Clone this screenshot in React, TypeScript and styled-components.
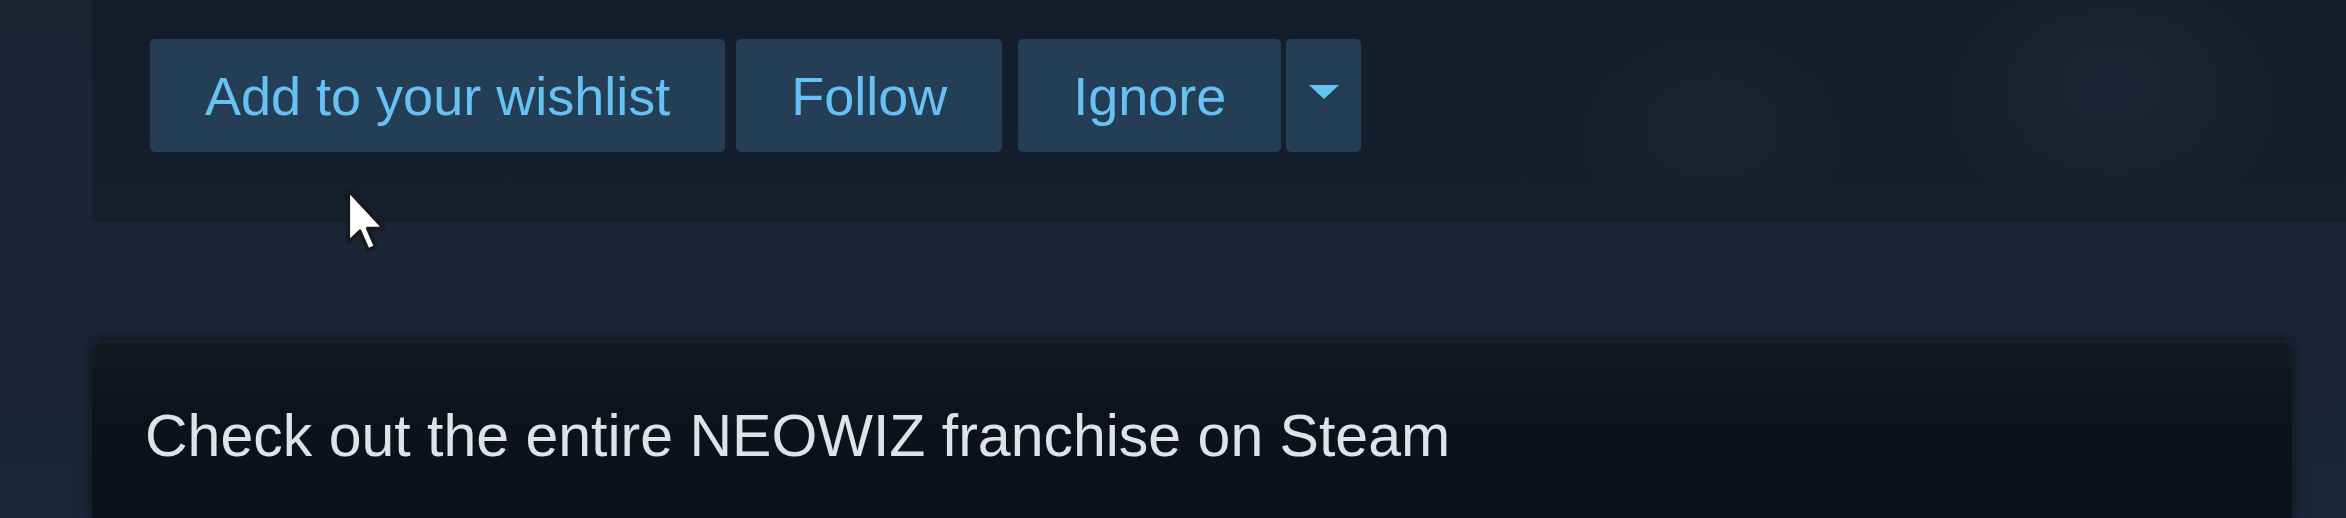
import styled, { createGlobalStyle } from "styled-components";

const GlobalStyle = createGlobalStyle`
  html, body {
    margin: 0;
    padding: 0;
    background: #1b2537;
    overflow: hidden;
  }
  body {
    font-family: "Liberation Sans", Arial, sans-serif;
  }
`;

const Page = styled.div`
  position: relative;
  width: 2346px;
  height: 518px;
  overflow: hidden;
  display: flex;
  flex-direction: column;
  padding-left: 92px;
  box-sizing: border-box;
  background: linear-gradient(180deg, #1a2433 0%, #1b2537 60%, #1c2639 100%);
`;

const Header = styled.div`
  height: 222px;
  display: flex;
  align-items: flex-start;
  padding: 39px 0 0 58px;
  box-sizing: border-box;
  background:
    radial-gradient(ellipse 260px 200px at 2020px 80px, rgba(40, 52, 72, 0.35), transparent 70%),
    radial-gradient(ellipse 200px 160px at 1620px 120px, rgba(40, 52, 72, 0.25), transparent 70%),
    linear-gradient(180deg, #141d2a 0%, #161f2d 100%);
`;

const Actions = styled.div`
  display: flex;
  align-items: center;
  gap: 11px;
`;

const Group = styled.div`
  display: flex;
  gap: 5px;
  margin-left: 5px;
`;

const ActionButton = styled.button`
  height: 113px;
  padding: 0 55px;
  border: none;
  border-radius: 5px;
  background: #243e56;
  color: #67c1f5;
  font-family: "Liberation Sans", Arial, sans-serif;
  font-size: 54px;
  display: flex;
  align-items: center;
  cursor: pointer;
`;

const DropButton = styled(ActionButton)`
  width: 75px;
  padding: 0 0 8px;
  justify-content: center;
  box-sizing: border-box;
`;

const Gap = styled.div`
  height: 118px;
  flex-shrink: 0;
`;

const Franchise = styled.div`
  width: 2200px;
  flex: 1;
  box-sizing: border-box;
  padding: 61px 0 0 53px;
  border-radius: 10px 10px 0 0;
  border-top: 2px solid rgba(120, 130, 145, 0.12);
  background: linear-gradient(180deg, #151a22 0%, #0e131b 70px, #0c1119 100%);
  box-shadow: 0 0 14px rgba(5, 8, 14, 0.7);
  color: #dfe3e6;
  font-size: 59px;
  line-height: 1.15;
`;

const Pointer = styled.svg`
  position: absolute;
  left: 345px;
  top: 188px;
  filter: drop-shadow(0 0 1px rgba(0, 0, 0, 0.6));
`;

const Caret = () => (
  <svg width="30" height="14" viewBox="0 0 30 14">
    <path d="M0 0 L30 0 L15 14 Z" fill="#67c1f5" />
  </svg>
);

export default function App() {
  return (
    <>
      <GlobalStyle />
      <Page>
        <Header>
          <Actions>
            <ActionButton>Add to your wishlist</ActionButton>
            <ActionButton>Follow</ActionButton>
            <Group>
              <ActionButton>Ignore</ActionButton>
              <DropButton aria-label="More options">
                <Caret />
              </DropButton>
            </Group>
          </Actions>
        </Header>
        <Gap />
        <Franchise>Check out the entire NEOWIZ franchise on Steam</Franchise>
        <Pointer width="42" height="66" viewBox="0 0 13 21">
          <path
            d="M1 1 L1 17 L4.6 13.6 L7.2 19.6 L9.4 18.6 L6.9 12.8 L12 12.8 Z"
            fill="#ffffff"
            stroke="#1a1a1a"
            strokeWidth="0.9"
            strokeLinejoin="round"
          />
        </Pointer>
      </Page>
    </>
  );
}
